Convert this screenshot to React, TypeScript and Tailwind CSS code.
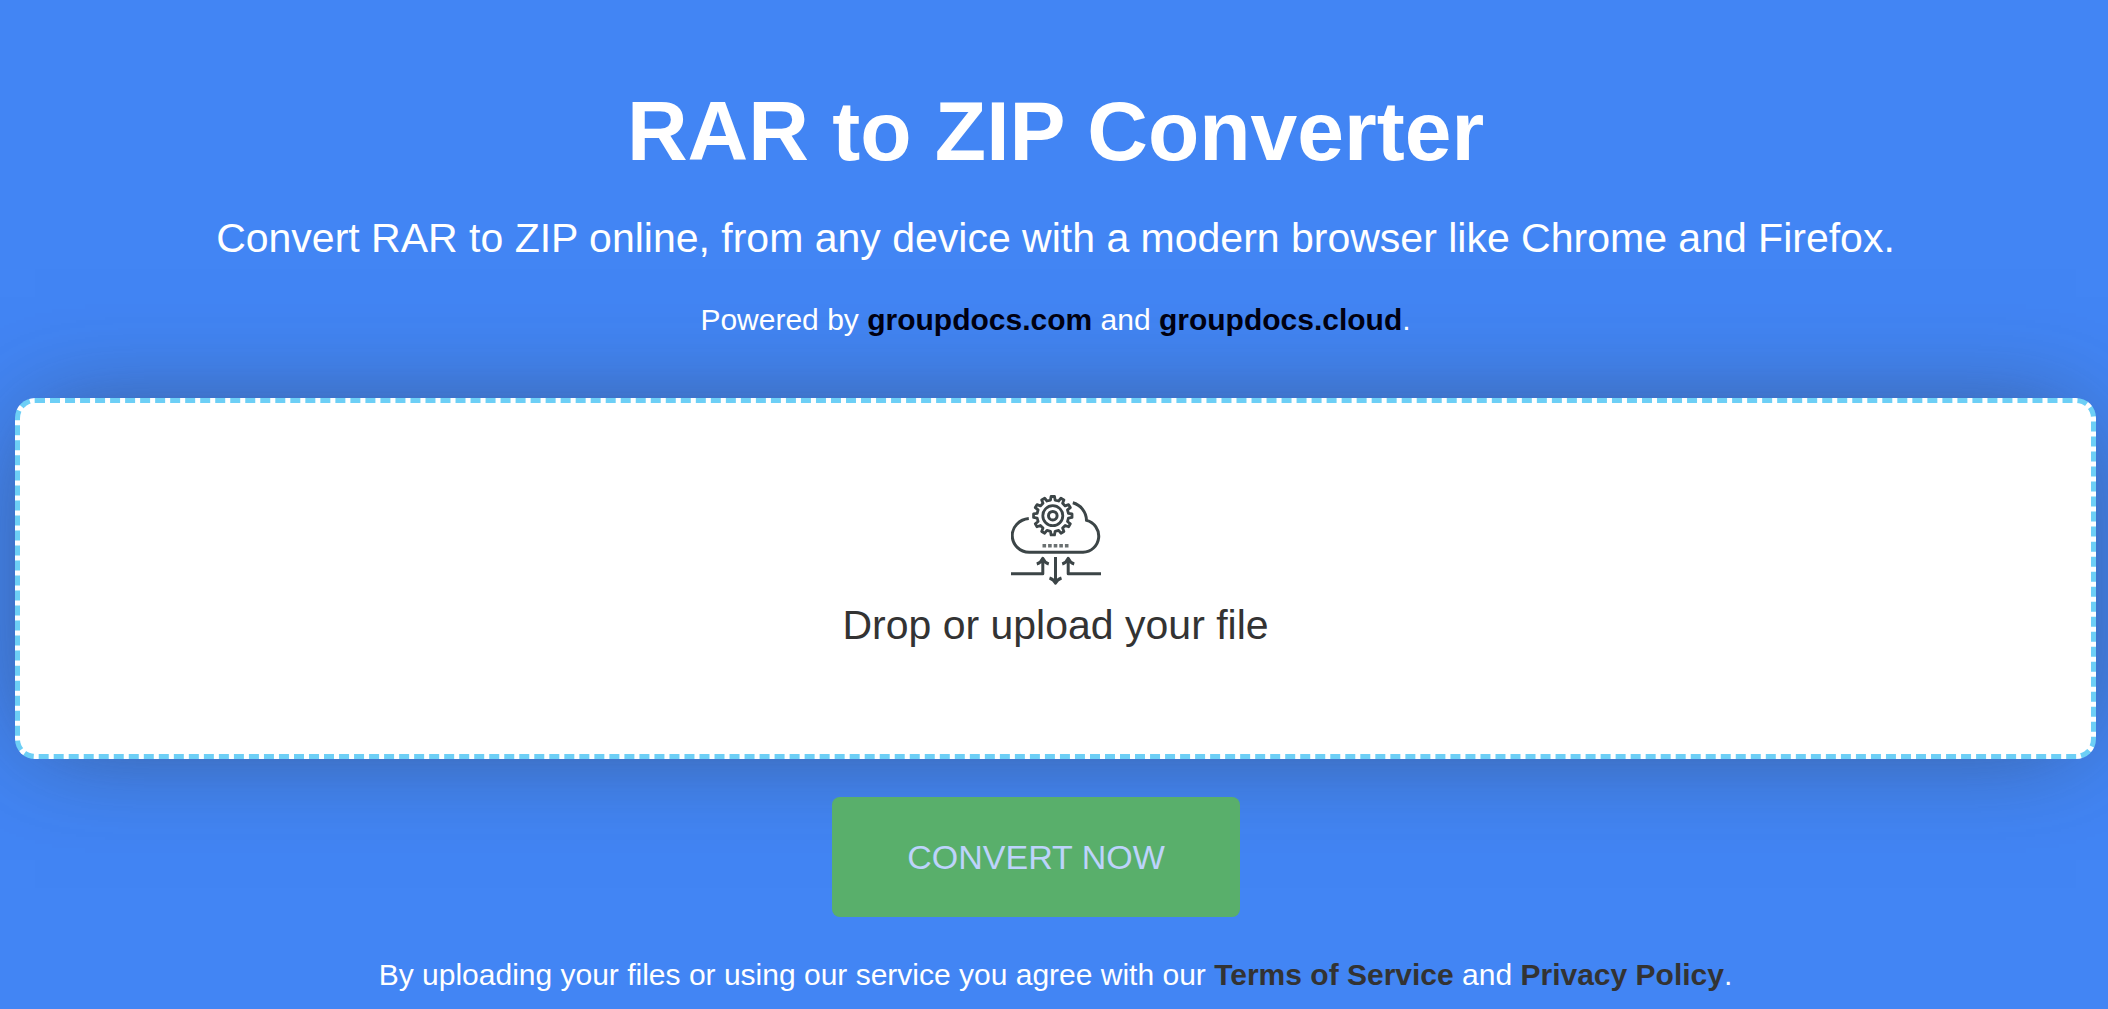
import { useState } from 'react';
import type { ReactNode } from 'react';

const GEAR_TEETH = 12;

/**
 * Closed gear outline with tapered teeth, centred on (cx, cy).
 */
function gearPath(cx: number, cy: number, outer: number, inner: number) {
  const step = (Math.PI * 2) / GEAR_TEETH;
  const points: string[] = [];
  for (let i = 0; i < GEAR_TEETH; i++) {
    const angle = i * step - Math.PI / 2;
    const corners = [
      [inner, -0.28],
      [outer, -0.17],
      [outer, 0.17],
      [inner, 0.28],
    ];
    for (const [radius, offset] of corners) {
      const a = angle + offset * step;
      points.push(`${(cx + radius * Math.cos(a)).toFixed(2)} ${(cy + radius * Math.sin(a)).toFixed(2)}`);
    }
  }
  return `M${points.join('L')}Z`;
}

function CloudGearIcon() {
  return (
    <svg
      className="h-[90px] w-[90px]"
      viewBox="0.5 0 90 90"
      fill="none"
      stroke="#3c4547"
      strokeWidth="3"
      strokeLinejoin="round"
      aria-hidden="true"
    >
      <path d="M18.3 23.6C8.5 24.6 1.7 32 1.7 40.6A17 17 0 0 0 18.7 57.3H72.5A16.2 16.2 0 0 0 76 25.4A18.5 18.5 0 0 0 62.3 7.8" />
      <path d={gearPath(42.3, 20.7, 19.3, 15.8)} strokeWidth="2.8" />
      <circle cx="42.3" cy="20.7" r="10" strokeWidth="2.8" />
      <circle cx="42.3" cy="20.7" r="4.3" />
      <path d="M32 50.7H58.5" strokeWidth="3.6" strokeDasharray="3.6 2" stroke="#6a7071" />
      <path d="M0 78.7H32.3V63M26.3 69Q30.6 67.6 32.3 63.4Q34 67.6 38.3 69" />
      <path d="M91 78.7H57.7V63M51.7 69Q56 67.6 57.7 63.4Q59.4 67.6 63.7 69" />
      <path d="M45 62V88M39 83Q43.3 84.4 45 88.2Q46.7 84.4 51 83" />
    </svg>
  );
}

function TextLink({ href, className, children }: { href: string; className: string; children: ReactNode }) {
  return (
    <a href={href} className={`font-bold hover:underline ${className}`}>
      {children}
    </a>
  );
}

export default function App() {
  const [fileName, setFileName] = useState('');

  return (
    <main className="min-h-screen overflow-hidden bg-[#4285f4] pt-[85px] pr-3 pl-[15px] text-center font-['Liberation_Sans',Arial,sans-serif] text-white">
      <h1 className="text-[84px] leading-[92px] font-bold">RAR to ZIP Converter</h1>
      <p className="mt-[31px] text-[41px] leading-[60px]">
        Convert RAR to ZIP online, from any device with a modern browser like Chrome and Firefox.
      </p>
      <p className="mt-[30px] text-[30px] leading-[44px]">
        Powered by{' '}
        <TextLink href="#groupdocs" className="text-[#000011]">
          groupdocs.com
        </TextLink>{' '}
        and{' '}
        <TextLink href="#cloud" className="text-[#000011]">
          groupdocs.cloud
        </TextLink>
        .
      </p>

      <form onSubmit={(event) => event.preventDefault()}>
        <label
          htmlFor="file"
          className="mt-[56px] flex cursor-pointer flex-col items-center rounded-[20px] border-[5px] border-dashed border-[#6dcff6] bg-white pt-[92px] pb-[99px] text-[41px] leading-[60px] text-[#333333] shadow-[0_0_100px_-20px_rgba(51,51,51,0.6)]"
        >
          <CloudGearIcon />
          <span className="mt-[10px]">{fileName || 'Drop or upload your file'}</span>
          <input
            id="file"
            type="file"
            accept=".rar"
            className="sr-only"
            onChange={(event) => setFileName(event.target.files?.[0]?.name ?? '')}
          />
        </label>
        <button
          type="submit"
          disabled={!fileName}
          className="relative mt-[38px] mr-[39px] h-[120px] rounded-lg bg-[#5cb85c] px-[75px] text-[34px] leading-[50px] text-white disabled:bg-[#59af6b] disabled:text-[#bdd3fb]"
        >
          CONVERT NOW
        </button>
      </form>

      <p className="mt-[36px] text-[30px] leading-[44px]">
        By uploading your files or using our service you agree with our{' '}
        <TextLink href="#terms" className="text-[#333333]">
          Terms of Service
        </TextLink>{' '}
        and{' '}
        <TextLink href="#privacy" className="text-[#333333]">
          Privacy Policy
        </TextLink>
        .
      </p>
    </main>
  );
}
